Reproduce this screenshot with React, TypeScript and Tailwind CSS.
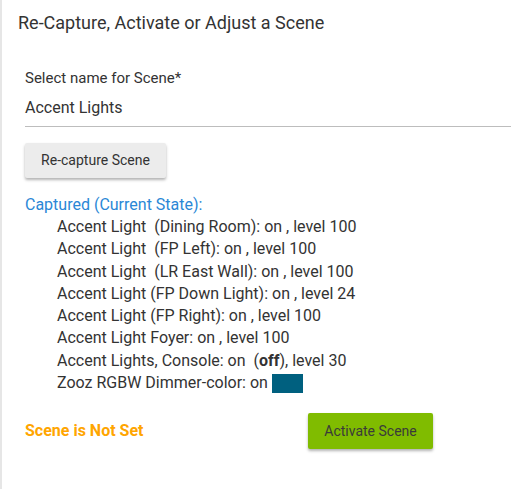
import React from "react";

const captured = [
  "Accent Light  (Dining Room): on , level 100",
  "Accent Light  (FP Left): on , level 100",
  "Accent Light  (LR East Wall): on , level 100",
  "Accent Light (FP Down Light): on , level 24",
  "Accent Light (FP Right): on , level 100",
  "Accent Light Foyer: on , level 100",
];

export default function App() {
  return (
    <div
      className="h-[489px] w-[511px] bg-white border-l-2 border-[#e6e6e6] text-[#333333] overflow-hidden"
      style={{ fontFamily: "Roboto, 'Liberation Sans', sans-serif" }}
    >
      <h1 className="pl-[16px] pt-[11px] text-[18px] leading-6 font-normal">
        Re-Capture, Activate or Adjust a Scene
      </h1>

      <div className="pl-[23px] mt-[33px]">
        <div className="text-[15px] leading-5">Select name for Scene*</div>
        <div className="mt-[10px] pb-[8px] border-b border-[#bdbdbd] text-[16px] leading-5">
          Accent Lights
        </div>

        <button className="mt-[16px] w-[141px] h-[35px] rounded-[2px] bg-[#ececec] text-[14px] text-[#333] shadow-[0_2px_3px_rgba(0,0,0,0.3)]">
          Re-capture Scene
        </button>

        <div className="mt-[16px] text-[16px] leading-[22px] text-[#2a87d6]">
          Captured (Current State):
        </div>
        <div className="pl-[32px] text-[16px] leading-[22.3px]">
          {captured.map((line) => (
            <div key={line} className="whitespace-pre">
              {line}
            </div>
          ))}
          <div className="whitespace-pre">
            Accent Lights, Console: on  (<b className="font-bold">off</b>), level 30
          </div>
          <div className="whitespace-pre">
            Zooz RGBW Dimmer-color: on{" "}
            <span className="inline-block w-[31px] h-[19px] align-middle bg-[#00607f]" />
          </div>
        </div>

        <div className="mt-[19px] flex items-center">
          <div className="w-[283px] text-[16px] font-bold text-[#ffa500]">
            Scene is Not Set
          </div>
          <button className="w-[125px] h-[36px] rounded-[2px] bg-[#80bc00] text-[14px] text-[#3a3a3a] shadow-[0_2px_3px_rgba(0,0,0,0.3)]">
            Activate Scene
          </button>
        </div>
      </div>
    </div>
  );
}
